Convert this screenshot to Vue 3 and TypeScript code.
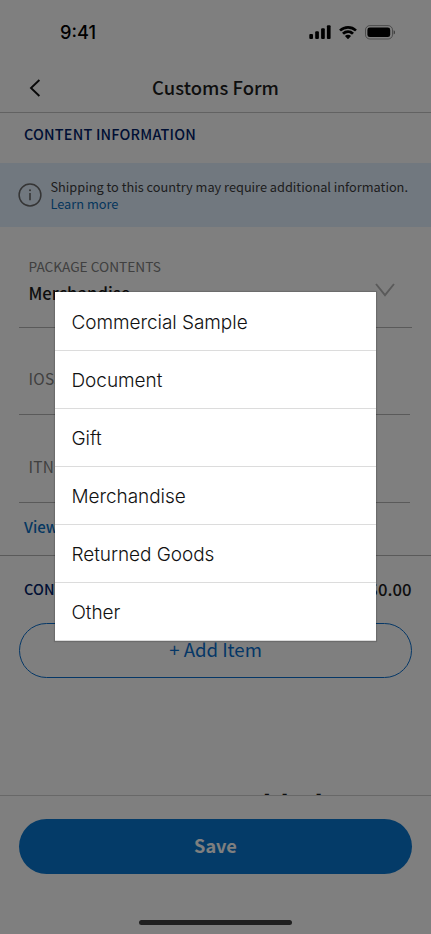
<script setup lang="ts">
import { ref } from 'vue'

const options: string[] = ['Commercial Sample', 'Document', 'Gift', 'Merchandise', 'Returned Goods', 'Other']
const selected = ref<string>('Merchandise')
const menuOpen = ref<boolean>(true)

function choose(option: string): void {
  selected.value = option
  menuOpen.value = false
}
</script>

<template>
  <div class="screen">
    <div class="status">
      <span class="time">9:41</span>
      <div class="indicators">
        <svg class="signal" width="22" height="14" viewBox="0 0 22 14">
          <rect x="0.3" y="9" width="3.7" height="5" rx="1" />
          <rect x="6.2" y="6.3" width="3.7" height="7.7" rx="1" />
          <rect x="12.1" y="3.2" width="3.7" height="10.8" rx="1" />
          <rect x="17.9" y="0.2" width="3.7" height="13.8" rx="1" />
        </svg>
        <svg class="wifi" width="18" height="13" viewBox="0 0 18 13">
          <path d="M9 0C5.7 0 2.6 1.25.3 3.4l-.1.35 1.55 1.6.4 0A10 10 0 0 1 9 2.65a10 10 0 0 1 6.85 2.7l.4 0 1.55-1.6-.1-.35A12.7 12.7 0 0 0 9 0Z" />
          <path d="M9 4.35a8.4 8.4 0 0 0-5.75 2.25v.4L4.8 8.6h.4A5.7 5.7 0 0 1 9 7.05c1.45 0 2.8.55 3.8 1.55h.4L14.75 7v-.4A8.4 8.4 0 0 0 9 4.35Z" />
          <path d="M9 8.7c-1.1 0-2.05.35-2.85 1v.45L8.75 12.9h.5l2.6-2.75V9.7A4.3 4.3 0 0 0 9 8.7Z" />
        </svg>
        <svg class="battery" width="30" height="15" viewBox="0 0 30 15">
          <rect x="0.5" y="0.6" width="27" height="13.4" rx="4.3" fill="none" stroke="#000" stroke-opacity="0.4" />
          <rect x="2.4" y="2.5" width="22.8" height="9.6" rx="2.4" />
          <path d="M28.6 5.2v4.4c1.1-.4 1.5-1.2 1.5-2.2s-.4-1.8-1.5-2.2Z" fill-opacity="0.5" />
        </svg>
      </div>
    </div>

    <header class="header">
      <svg class="back" width="12" height="18" viewBox="0 0 12 18">
        <path d="M10.4 1 2 9l8.4 8" fill="none" stroke="#111" stroke-width="1.9" />
      </svg>
      <h1 class="title">Customs Form</h1>
    </header>

    <main class="content">
      <h2 class="section-title">CONTENT INFORMATION</h2>

      <div class="notice">
        <svg class="info" width="24" height="24" viewBox="0 0 24 24">
          <circle cx="12" cy="12" r="10.9" fill="none" stroke="#6a6a6a" stroke-width="1.5" />
          <path d="M12 9.9v7.4" stroke="#6a6a6a" stroke-width="1.6" />
          <circle cx="12" cy="7.2" r="1" fill="#6a6a6a" />
        </svg>
        <div class="notice-text">
          <p>Shipping to this country may require additional information.</p>
          <a>Learn more</a>
        </div>
      </div>

      <div class="field select" @click="menuOpen = true">
        <div>
          <div class="label">PACKAGE CONTENTS</div>
          <div class="value">{{ selected }}</div>
        </div>
        <svg class="chevron" width="20" height="14" viewBox="0 0 20 14">
          <path d="M1 1l9 11.2L19 1" fill="none" stroke="#b4b4b4" stroke-width="1.9" />
        </svg>
      </div>
      <div class="field plain first">IOSS Number</div>
      <div class="field plain">ITN Number</div>
      <a class="view-link">View ITN Requirements</a>

      <div class="items-row">
        <h2>CONTENTS</h2>
        <span class="total">$0.00</span>
      </div>
      <button class="add">+ Add Item</button>
      <p class="empty">No Items Added</p>
    </main>

    <footer class="footer">
      <button class="save">Save</button>
      <div class="home"></div>
    </footer>

    <div v-if="menuOpen" class="overlay">
      <ul class="menu">
        <li v-for="option in options" :key="option" @click="choose(option)">{{ option }}</li>
      </ul>
    </div>
  </div>
</template>

<style scoped>
.screen {
  position: relative;
  display: flex;
  flex-direction: column;
  width: 431px;
  height: 934px;
  overflow: hidden;
  background: #fff;
  color: #1c1c1c;
  font-family: "Noto Sans CJK SC", "Noto Sans", sans-serif;
}
h1, h2, p, ul { margin: 0; padding: 0; font: inherit; }
button { border: 0; padding: 0; font-family: inherit; }
svg { display: block; flex: none; }

.status {
  display: flex;
  justify-content: space-between;
  align-items: center;
  height: 64px;
  padding: 0 36px 0 60px;
  box-sizing: border-box;
}
.time {
  font: 550 18.2px/24px Inter, sans-serif;
  color: #000;
}
.indicators { display: flex; align-items: center; gap: 8px; }

.header {
  display: grid;
  grid-template-columns: 28px 1fr 28px;
  align-items: center;
  flex: none;
  height: 49px;
  padding: 0 27px;
  box-sizing: border-box;
  border-bottom: 1px solid #c4c4c4;
}
.back { margin-left: 1.5px; }
.title {
  padding-bottom: 2px;
  text-align: center;
  font-size: 18.4px;
  font-weight: 500;
  line-height: 28px;
  letter-spacing: 0.04px;
}

.content { flex: 1; min-height: 0; overflow: hidden; }
.section-title {
  height: 50px;
  padding: 0 24px;
  box-sizing: border-box;
  font-size: 14.4px;
  font-weight: 500;
  line-height: 41px;
  letter-spacing: 0.21px;
  color: #002169;
}
.notice {
  display: flex;
  gap: 8.5px;
  height: 64px;
  padding: 15px 18px 0;
  box-sizing: border-box;
  background: #e2f0ff;
  font-size: 12.75px;
  line-height: 18px;
}
.info { margin-top: 5px; }
.notice-text { white-space: nowrap; color: #3c3c3c; }
.notice-text a { display: block; margin-top: -1px; color: #0b6cb8; }

.field {
  margin: 0 20px 0 19px;
  padding-left: 9.5px;
  box-sizing: border-box;
  border-bottom: 1px solid #b4b4b4;
}
.select {
  display: flex;
  justify-content: space-between;
  height: 101px;
  padding-top: 28px;
  margin-right: 19px;
}
.label {
  font-size: 13.7px;
  font-weight: 400;
  line-height: 22px;
  color: #808080;
}
.value { font-size: 16.7px; font-weight: 500; line-height: 32px; }
.chevron { margin: 28px 17px 0 0; }
.plain {
  height: 88px;
  padding-top: 39px;
  margin-right: 21px;
  font-size: 15.4px;
  line-height: 24px;
  letter-spacing: 0.25px;
  color: #808080;
}
.plain.first { height: 87px; padding-top: 38px; }
.view-link {
  display: block;
  height: 52px;
  padding-left: 24px;
  border-bottom: 1px solid #b4b4b4;
  font-size: 15px;
  font-weight: 500;
  line-height: 47px;
  color: #0a70c4;
}
.items-row {
  display: flex;
  justify-content: space-between;
  height: 67px;
  padding: 0 19.5px 0 24px;
  line-height: 66px;
  font-weight: 500;
}
.items-row h2 { font-size: 14.4px; font-weight: 500; letter-spacing: 0.21px; color: #002169; }
.total { font-size: 16.7px; }
.add {
  display: block;
  width: 393px;
  height: 55px;
  margin-left: 19px;
  border: 1.3px solid #0a6fce;
  border-radius: 28px;
  background: #fff;
  color: #0a6fce;
  font-size: 18.6px;
  line-height: 46px;
  padding-bottom: 4px;
}
.empty {
  margin-top: 106px;
  text-align: center;
  font-size: 27.7px;
  font-weight: 700;
  line-height: 40px;
}

.footer {
  position: relative;
  display: flex;
  flex-direction: column;
  align-items: center;
  flex: none;
  height: 139px;
  padding-top: 23px;
  box-sizing: border-box;
  border-top: 1px solid #d0d0d0;
  background: #fff;
}
.save {
  width: 393px;
  height: 55px;
  border-radius: 28px;
  background: #0977d0;
  color: #fff;
  font-size: 18.1px;
  font-weight: 700;
  line-height: 50px;
  padding-bottom: 3px;
}
.home {
  width: 153px;
  height: 5px;
  margin-top: 46px;
  border-radius: 3px;
  background: #404040;
}

.overlay {
  position: absolute;
  inset: 0;
  padding: 292px 0 0 55px;
  background: rgba(0, 0, 0, 0.5);
}
.menu {
  width: 321px;
  list-style: none;
  background: #fff;
  box-shadow: 0 0 1px 1px rgba(0, 0, 0, 0.15);
}
.menu li {
  height: 58px;
  padding-left: 16.5px;
  box-sizing: border-box;
  border-bottom: 1px solid #dcdcdc;
  font: 350 19px/59px Inter, sans-serif;
  letter-spacing: -0.05px;
  color: #111;
}
.menu li:first-child { height: 59px; line-height: 61px; }
</style>
